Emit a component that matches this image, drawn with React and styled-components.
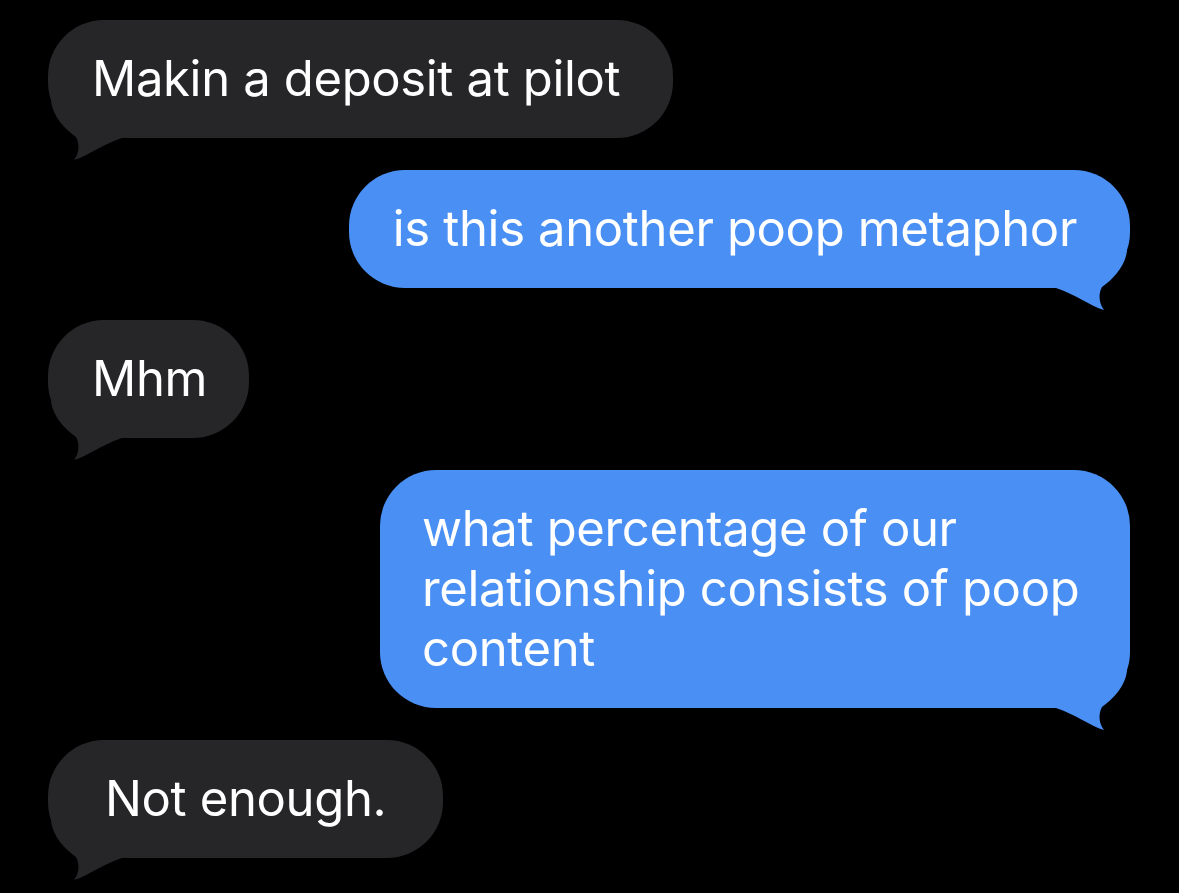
import React from 'react';
import styled, { createGlobalStyle } from 'styled-components';

const GlobalStyle = createGlobalStyle`
    html, body {
        margin: 0;
        padding: 0;
        background: #000;
    }
`

const Thread = styled.div`
    display: flex;
    flex-direction: column;
    gap: 32px;
    padding: 20px 49px 40px 48px;
    min-height: 893px;
    box-sizing: border-box;
    background: #000;
    font-family: Inter, "Liberation Sans", sans-serif;
`

const Row = styled.div`
    display: flex;
    justify-content: ${p => p.$sent ? 'flex-end' : 'flex-start'};
`

const Bubble = styled.div`
    position: relative;
    box-sizing: border-box;
    max-width: ${p => p.$maxWidth || 'none'};
    padding: 29px ${p => p.$padR ?? 53}px 29px ${p => p.$padL ?? 44}px;
    border-radius: 56px;
    background: ${p => p.$sent ? '#4a90f4' : '#262629'};
    color: #fff;
    font-size: 49px;
    line-height: 60px;
    letter-spacing: -0.35px;
`

const Tail = styled.svg`
    position: absolute;
    bottom: -22px;
    ${p => p.$sent ? 'right: 0; transform: scaleX(-1);' : 'left: 0;'}
    width: 80px;
    height: 60px;
    pointer-events: none;
`

const BubbleTail = ({ sent }) => (
    <Tail $sent={sent} viewBox="0 0 80 60">
        <path
            d="M 3 0 C 4 16, 18 30, 28 37 C 32 44, 31 54, 26 60 C 40 56, 55 44, 74 38 L 74 0 Z"
            fill={sent ? '#4a90f4' : '#262629'}
        />
    </Tail>
)

const messages = [
    { text: 'Makin a deposit at pilot' },
    { text: 'is this another poop metaphor', sent: true },
    { text: 'Mhm', padR: 42 },
    { text: 'what percentage of our relationship consists of poop content', sent: true, maxWidth: '750px', padL: 42, padR: 36 },
    { text: 'Not enough.', padL: 57, padR: 57 },
]

export default function App() {
    return (
        <>
            <GlobalStyle />
            <Thread>
                {messages.map((msg, i) => (
                    <Row key={i} $sent={msg.sent}>
                        <Bubble
                            $sent={msg.sent}
                            $maxWidth={msg.maxWidth}
                            $padL={msg.padL}
                            $padR={msg.padR}
                        >
                            {msg.text}
                            <BubbleTail sent={msg.sent} />
                        </Bubble>
                    </Row>
                ))}
            </Thread>
        </>
    )
}
